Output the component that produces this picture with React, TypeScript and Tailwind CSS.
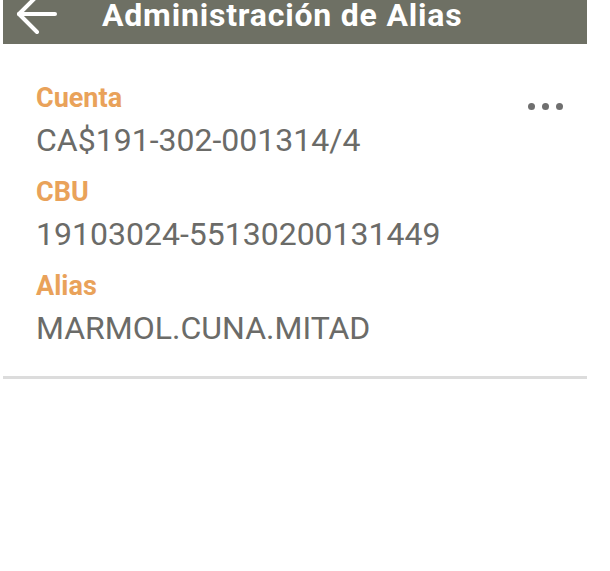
import React from "react";

const rows = [
  { label: "Cuenta", value: "CA$191-302-001314/4" },
  { label: "CBU", value: "19103024-55130200131449" },
  { label: "Alias", value: "MARMOL.CUNA.MITAD" },
];

export default function App() {
  return (
    <div className="w-[610px] h-[571px] bg-white font-['Roboto',sans-serif]">
      <div className="mx-[3px] w-[584px]">
        {/* Toolbar, partly scrolled off the top */}
        <div className="h-[44px] bg-[#6e7064] flex items-start overflow-hidden">
          <svg width="60" height="44" viewBox="0 0 60 44" className="shrink-0" fill="none" stroke="white" strokeWidth="4" strokeLinecap="round" strokeLinejoin="round">
            <path d="M52 14H16" />
            <path d="M34 -4L16 14l18 18" />
          </svg>
          <h1 className="ml-[39px] -mt-[1px] text-[32px] leading-[32px] font-bold tracking-[0.8px] text-white whitespace-nowrap">
            Administración de Alias
          </h1>
        </div>

        <div className="relative pl-[33px] pt-[39px] pb-[28px] border-b-[3px] border-[#dcdcdc]">
          <div className="absolute right-[24px] top-[59px] flex gap-[7px]">
            <span className="w-[7px] h-[7px] rounded-full bg-[#6f6f6f]" />
            <span className="w-[7px] h-[7px] rounded-full bg-[#6f6f6f]" />
            <span className="w-[7px] h-[7px] rounded-full bg-[#6f6f6f]" />
          </div>
          <div className="flex flex-col gap-[17px]">
            {rows.map((r) => (
              <div key={r.label}>
                <div className="text-[27px] leading-[30px] font-bold text-[#e9a25a]">{r.label}</div>
                <div className="mt-[7px] text-[32px] leading-[40px] text-[#6b6b68]">{r.value}</div>
              </div>
            ))}
          </div>
        </div>
      </div>
    </div>
  );
}
